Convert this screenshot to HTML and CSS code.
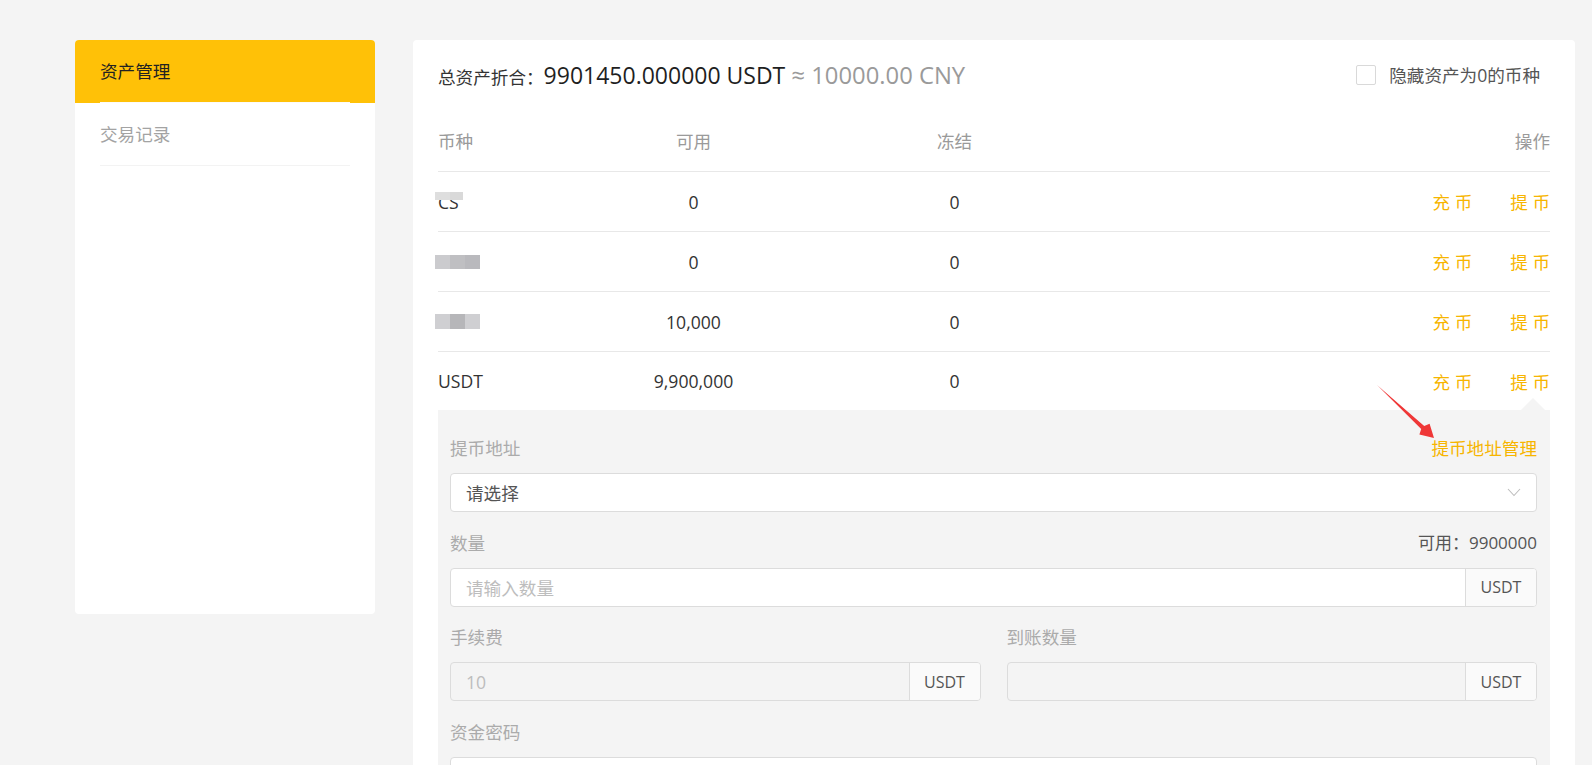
FILE: index.html
```html
<!DOCTYPE html>
<html lang="zh-CN">
<head>
<meta charset="utf-8">
<title>资产管理</title>
<link rel="stylesheet" href="styles.css">
</head>
<body>
<div class="page">
  <aside class="sidebar">
    <div class="nav-item active"><span class="nav-text">资产管理</span></div>
    <div class="nav-item"><span class="nav-text">交易记录</span></div>
  </aside>

  <main class="main">
    <div class="summary">
      <div class="total">
        <span class="total-label">总资产折合：</span><span class="total-num">9901450.000000 USDT</span><span class="total-cny"> ≈ 10000.00 CNY</span>
      </div>
      <label class="hide-zero"><span class="checkbox"></span><span>隐藏资产为0的币种</span></label>
    </div>

    <div class="table">
      <div class="row head">
        <div class="c-coin">币种</div>
        <div class="c-num">可用</div>
        <div class="c-num">冻结</div>
        <div class="c-op">操作</div>
      </div>
      <div class="row">
        <div class="c-coin"><span class="masked">CS<span class="mask-over"><i class="m1"></i><i class="m2"></i></span></span></div>
        <div class="c-num">0</div>
        <div class="c-num">0</div>
        <div class="c-op"><a class="link">充 币</a><a class="link">提 币</a></div>
      </div>
      <div class="row">
        <div class="c-coin"><span class="mosaic"><i class="g1"></i><i class="g2"></i><i class="g3"></i></span></div>
        <div class="c-num">0</div>
        <div class="c-num">0</div>
        <div class="c-op"><a class="link">充 币</a><a class="link">提 币</a></div>
      </div>
      <div class="row">
        <div class="c-coin"><span class="mosaic tall"><i class="g4"></i><i class="g5"></i><i class="g4"></i></span></div>
        <div class="c-num">10,000</div>
        <div class="c-num">0</div>
        <div class="c-op"><a class="link">充 币</a><a class="link">提 币</a></div>
      </div>
      <div class="row last">
        <div class="c-coin">USDT</div>
        <div class="c-num">9,900,000</div>
        <div class="c-num">0</div>
        <div class="c-op"><a class="link">充 币</a><a class="link">提 币</a></div>
      </div>
    </div>

    <div class="panel">
      <svg class="annot-arrow" width="70" height="70" viewBox="0 0 70 70">
        <polygon points="3,3 50.2,43.9 55.6,41.8 60,56 45.4,52.6 47.2,47.1" fill="#ef3737"/>
      </svg>

      <div class="field">
        <div class="field-head"><span class="field-label">提币地址</span><a class="link">提币地址管理</a></div>
        <div class="input">
          <span class="input-text value">请选择</span>
          <svg class="chev" width="14" height="9" viewBox="0 0 14 9"><polyline points="1,1 7,7.5 13,1" fill="none" stroke="#bdbdbd" stroke-width="1.1"/></svg>
        </div>
      </div>

      <div class="field">
        <div class="field-head"><span class="field-label">数量</span><span class="avail">可用：9900000</span></div>
        <div class="input">
          <span class="input-text placeholder">请输入数量</span>
          <span class="addon">USDT</span>
        </div>
      </div>

      <div class="field-pair">
        <div class="field">
          <div class="field-head"><span class="field-label">手续费</span></div>
          <div class="input disabled">
            <span class="input-text placeholder">10</span>
            <span class="addon">USDT</span>
          </div>
        </div>
        <div class="field">
          <div class="field-head"><span class="field-label">到账数量</span></div>
          <div class="input disabled">
            <span class="input-text placeholder"></span>
            <span class="addon">USDT</span>
          </div>
        </div>
      </div>

      <div class="field">
        <div class="field-head"><span class="field-label">资金密码</span></div>
        <div class="input">
          <span class="input-text placeholder"></span>
        </div>
      </div>
    </div>
  </main>
</div>
</body>
</html>
```

FILE: styles.css
```css
html, body {
  margin: 0;
  padding: 0;
  height: 765px;
  overflow: hidden;
}

body {
  background: #f4f4f4;
  font-family: "Open Sans", "Noto Sans CJK SC", sans-serif;
  font-size: 17.6px;
  color: #333;
}

.page {
  display: flex;
  align-items: flex-start;
  gap: 38px;
  padding: 40px 0 0 75px;
}

/* Sidebar */
.sidebar {
  width: 300px;
  height: 574px;
  background: #fff;
  border-radius: 4px;
  overflow: hidden;
  flex: none;
}

.nav-item {
  padding: 0 25px;
  height: 63px;
  box-sizing: border-box;
}

.nav-item.active {
  background: #ffc107;
}

.nav-text {
  display: block;
  height: 63px;
  line-height: 62px;
  box-sizing: border-box;
  border-bottom: 1px solid #f3f3f3;
  color: #a3a3a3;
}

.nav-item.active .nav-text {
  color: #222;
  border-bottom-color: #fbfbfb;
}

/* Main */
.main {
  width: 1162px;
  min-height: 900px;
  box-sizing: border-box;
  background: #fff;
  border-radius: 4px;
  padding: 0 25px;
  flex: none;
}

.summary {
  height: 69px;
  display: flex;
  align-items: center;
  justify-content: space-between;
}

.total {
  display: flex;
  align-items: baseline;
  white-space: pre;
}

.total-label {
  font-size: 17.6px;
  color: #333;
}

.total-num {
  font-size: 23px;
  color: #1f1f1f;
}

.total-cny {
  font-size: 23.8px;
  color: #9a9a9a;
}

.hide-zero {
  display: flex;
  align-items: center;
  gap: 13px;
  margin-right: 10px;
  color: #555;
  font-size: 17.6px;
}

.checkbox {
  width: 20px;
  height: 20px;
  box-sizing: border-box;
  border: 1px solid #d9d9d9;
  border-radius: 2px;
  background: #fff;
}

/* Table */
.row {
  display: grid;
  grid-template-columns: 125px 261px 261px 1fr;
  align-items: center;
  box-sizing: border-box;
  height: 60px;
  border-bottom: 1px solid #e8e8e8;
  color: #333;
}

.row.head {
  height: 63px;
  color: #9a9a9a;
}

.row.last {
  height: 58px;
  border-bottom: none;
}

.c-num {
  text-align: center;
}

.c-op {
  display: flex;
  justify-content: flex-end;
  gap: 38px;
}

.link {
  color: #f7b500;
  cursor: pointer;
}

.masked {
  position: relative;
  display: inline-block;
}

.mask-over {
  position: absolute;
  left: -3px;
  top: 2px;
  display: flex;
}

.mask-over i {
  display: block;
  height: 8px;
}

.mask-over .m1 { width: 15px; background: #dedede; }
.mask-over .m2 { width: 13px; background: #d9d9d9; }

.mosaic {
  display: flex;
  margin-left: -3px;
}

.mosaic i {
  display: block;
  width: 15px;
  height: 14px;
}

.mosaic.tall i { height: 15px; }

.g1 { background: #cbcbce; }
.g2 { background: #bfbfc2; }
.g3 { background: #b9b9bd; }
.g4 { background: #cfcfd2; }
.g5 { background: #b6b6b9; }

/* Withdraw panel */
.panel {
  position: relative;
  background: #f4f4f4;
  padding: 27px 13px 40px 12px;
}

.panel::before {
  content: "";
  position: absolute;
  top: -12px;
  right: 5px;
  border-left: 12.5px solid transparent;
  border-right: 12.5px solid transparent;
  border-bottom: 12px solid #f4f4f4;
}

.annot-arrow {
  position: absolute;
  left: 936px;
  top: -28px;
}

.field {
  margin-bottom: 19.5px;
}

.field-head {
  display: flex;
  justify-content: space-between;
  align-items: center;
  height: 22px;
  line-height: 22px;
  margin-bottom: 14px;
}

.field-label {
  color: #ababab;
}

.avail {
  color: #555;
  font-size: 17px;
}

.input {
  display: flex;
  align-items: center;
  height: 39px;
  box-sizing: border-box;
  border: 1px solid #dcdcdc;
  border-radius: 4px;
  background: #fff;
  overflow: hidden;
}

.input.disabled {
  background: #f4f4f4;
}

.input-text {
  flex: 1;
  padding: 0 15px;
}

.input-text.value { color: #555; }
.input-text.placeholder { color: #bdbdbd; }

.chev {
  margin-right: 15px;
}

.addon {
  align-self: stretch;
  width: 70px;
  display: flex;
  align-items: center;
  justify-content: center;
  border-left: 1px solid #dcdcdc;
  background: #fafafa;
  color: #555;
  font-size: 16px;
}

.field-pair {
  display: grid;
  grid-template-columns: 1fr 1fr;
  gap: 26px;
}
```
